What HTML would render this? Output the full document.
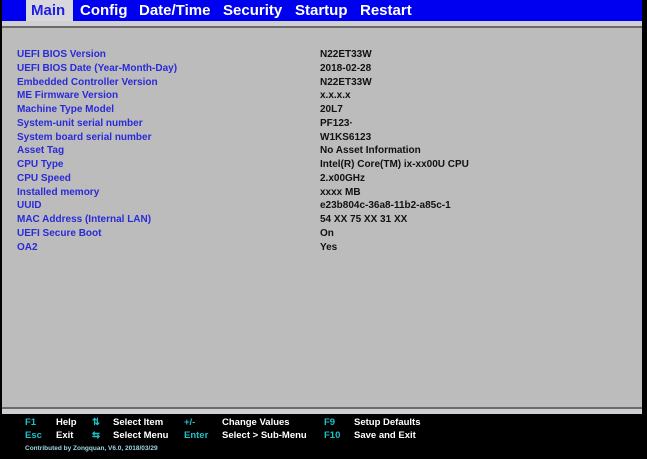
<!DOCTYPE html>
<html><head><style>
body{margin:0;width:647px;height:459px;background:#000;position:relative;overflow:hidden;font-family:"Liberation Sans",Arial,sans-serif;font-weight:bold}
.bar{position:absolute;left:2px;top:0;width:640px;height:21px;background:#0000f0}
.tab{position:absolute;top:1px;font-size:15px;color:#fff;line-height:20px}
.gray{position:absolute;left:2px;top:21px;width:640px;height:393px;background:#bcbcbc}
.lt{position:absolute;left:2px;width:640px;height:5px;background:#d0d0d4}
.dk{position:absolute;left:2px;width:640px;height:2px;background:#6a6a6a}
.r{position:absolute;font-size:10px;line-height:12px}
.l{left:17px;color:#2a2ad8}
.v{left:320px;color:#111}
.f{position:absolute;font-size:9.5px;line-height:12px;color:#fff}
.c{color:#1ec0c8}
</style></head><body>
<div class="gray"></div>
<div class="bar"></div>
<div style="position:absolute;left:26px;top:0;width:47px;height:21px;background:#d8d8dc"></div>
<div class="tab" style="left:31px;color:#1e1ee0">Main</div>
<div class="tab" style="left:80px">Config</div>
<div class="tab" style="left:139px">Date/Time</div>
<div class="tab" style="left:223px">Security</div>
<div class="tab" style="left:295px">Startup</div>
<div class="tab" style="left:360px">Restart</div>
<div class="lt" style="top:21px"></div>
<div class="dk" style="top:26px"></div>
<div class="dk" style="top:407px"></div>
<div class="lt" style="top:409px"></div>

<div class="r l" style="top:49px">UEFI BIOS Version</div><div class="r v" style="top:49px">N22ET33W</div>
<div class="r l" style="top:63px">UEFI BIOS Date (Year-Month-Day)</div><div class="r v" style="top:63px">2018-02-28</div>
<div class="r l" style="top:77px">Embedded Controller Version</div><div class="r v" style="top:77px">N22ET33W</div>
<div class="r l" style="top:90px">ME Firmware Version</div><div class="r v" style="top:90px">x.x.x.x</div>
<div class="r l" style="top:104px">Machine Type Model</div><div class="r v" style="top:104px">20L7</div>
<div class="r l" style="top:118px">System-unit serial number</div><div class="r v" style="top:118px">PF123·</div>
<div class="r l" style="top:132px">System board serial number</div><div class="r v" style="top:132px">W1KS6123</div>
<div class="r l" style="top:145px">Asset Tag</div><div class="r v" style="top:145px">No Asset Information</div>
<div class="r l" style="top:159px">CPU Type</div><div class="r v" style="top:159px">Intel(R) Core(TM) ix-xx00U CPU</div>
<div class="r l" style="top:173px">CPU Speed</div><div class="r v" style="top:173px">2.x00GHz</div>
<div class="r l" style="top:187px">Installed memory</div><div class="r v" style="top:187px">xxxx MB</div>
<div class="r l" style="top:200px">UUID</div><div class="r v" style="top:200px">e23b804c-36a8-11b2-a85c-1</div>
<div class="r l" style="top:214px">MAC Address (Internal LAN)</div><div class="r v" style="top:214px">54 XX 75 XX 31 XX</div>
<div class="r l" style="top:228px">UEFI Secure Boot</div><div class="r v" style="top:228px">On</div>
<div class="r l" style="top:242px">OA2</div><div class="r v" style="top:242px">Yes</div>

<div class="f c" style="left:25px;top:417px">F1</div><div class="f" style="left:56px;top:417px">Help</div>
<div class="f c" style="left:92px;top:417px">⇅</div><div class="f" style="left:113px;top:417px">Select Item</div>
<div class="f c" style="left:184px;top:417px">+/-</div><div class="f" style="left:222px;top:417px">Change Values</div>
<div class="f c" style="left:324px;top:417px">F9</div><div class="f" style="left:354px;top:417px">Setup Defaults</div>
<div class="f c" style="left:25px;top:430px">Esc</div><div class="f" style="left:56px;top:430px">Exit</div>
<div class="f c" style="left:92px;top:430px">⇆</div><div class="f" style="left:113px;top:430px">Select Menu</div>
<div class="f c" style="left:184px;top:430px">Enter</div><div class="f" style="left:222px;top:430px">Select &gt; Sub-Menu</div>
<div class="f c" style="left:324px;top:430px">F10</div><div class="f" style="left:354px;top:430px">Save and Exit</div>
<div class="f" style="left:25px;top:443px;font-size:6.5px;color:#9fd8e0">Contributed by Zongquan, V6.0, 2018/03/29</div>
</body></html>
